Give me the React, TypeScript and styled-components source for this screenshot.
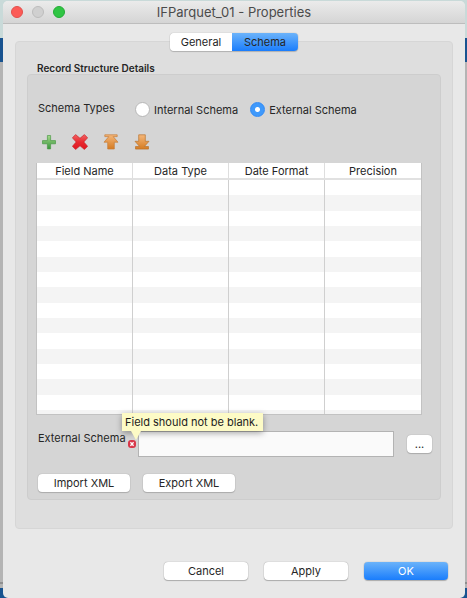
import React, { useState } from "react";
import styled, { createGlobalStyle, css } from "styled-components";

const GlobalStyle = createGlobalStyle`
  * { box-sizing: border-box; }
  body {
    margin: 0;
    font-family: Inter, "Liberation Sans", sans-serif;
    font-size: 11px;
    line-height: 14px;
    color: #262626;
  }
  button, input { font: inherit; color: inherit; }
`;

const Desktop = styled.div`
  display: flex;
  min-height: 100vh;
  padding: 1px 2px 0 3px;
  background: linear-gradient(
    #c9dad9 0, #c9dad9 38px,
    #185390 38px, #185390 62px,
    #b4b4b4 62px, #b4b4b4 calc(100% - 16px),
    #8f8f8f calc(100% - 16px), #8f8f8f calc(100% - 14px),
    #b4b4b4 calc(100% - 14px), #b4b4b4 calc(100% - 10px),
    #185390 calc(100% - 10px)
  );
`;

const Dialog = styled.main`
  flex: 1;
  display: flex;
  flex-direction: column;
  border-radius: 5px;
  background: #e8e8e8;
  overflow: hidden;
`;

const TitleBar = styled.header`
  display: grid;
  grid-template-columns: 1fr auto 1fr;
  align-items: center;
  height: 23px;
  padding: 0 8px;
  border-bottom: 1px solid #bdbdbd;
  background: linear-gradient(#ebebeb, #d5d5d5);
`;

const WindowControls = styled.div`
  display: flex;
  gap: 9px;
`;

const WindowControl = styled.button<{ $fill: string; $edge: string }>`
  width: 12px;
  height: 12px;
  padding: 0;
  border: 1px solid ${(p) => p.$edge};
  border-radius: 50%;
  background: ${(p) => p.$fill};
`;

const Title = styled.h1`
  margin: 0;
  font-size: 13px;
  line-height: 16px;
  font-weight: 400;
  color: #4b4b4b;
`;

const Content = styled.div`
  display: flex;
  flex-direction: column;
  padding: 9px 12px 18px;
`;

const TabList = styled.div`
  z-index: 1;
  align-self: center;
  display: flex;
  margin-bottom: -10px;
  border-radius: 4px;
  box-shadow: 0 0 1px #8a8a8a, 0 1px 1px #b5b5b5;
`;

const blue = css`
  background: linear-gradient(#6bb3fa, #1a7dfc);
`;

const Tab = styled.button<{ $active: boolean }>`
  height: 18px;
  width: 62px;
  padding: 0;
  border: 0;
  border-radius: 4px 0 0 4px;
  background: #fff;
  &:last-child { width: 66px; border-radius: 0 4px 4px 0; }
  ${(p) => p.$active && blue}
`;

const TabPanel = styled.section`
  padding: 20px 11px 28px;
  border: 1px solid #d6d6d6;
  border-radius: 4px;
  background: #dedede;
`;

const GroupTitle = styled.h2`
  margin: 0 10px;
  font-size: 10px;
  line-height: 12px;
  font-weight: 600;
`;

const Group = styled.div`
  display: flex;
  flex-direction: column;
  padding: 26px 18px 7px 8px;
  border: 1px solid #cdcdcd;
  border-radius: 4px;
  background: #d5d5d5;
`;

const TypeRow = styled.div`
  display: flex;
  padding-left: 2px;
`;

const TypeLabel = styled.span`
  width: 97px;
`;

const RadioLabel = styled.label`
  display: flex;
  align-items: center;
  gap: 4px;
  margin-right: 12px;
  padding-top: 1px;
`;

const Radio = styled.input`
  appearance: none;
  width: 15px;
  height: 15px;
  margin: 0;
  border: 1px solid #b7b7b7;
  border-radius: 50%;
  background: #fff;
  &:checked {
    border-color: #3089f5;
    background: radial-gradient(circle, #fff 0 2px, #3f99fb 3px);
  }
`;

const Toolbar = styled.div`
  display: flex;
  gap: 15px;
  margin: 17px 5px 13px;
`;

const ToolButton = styled.button`
  display: block;
  width: 16px;
  height: 16px;
  padding: 0;
  border: 0;
  background: none;
  svg { display: block; }
`;

const FieldTable = styled.table`
  width: 100%;
  height: 252px;
  table-layout: fixed;
  border-collapse: separate;
  border-spacing: 0;
  border: 1px solid #c2c2c2;
  border-top: 0;
  background: #fff;
`;

const HeadCell = styled.th`
  height: 17px;
  padding: 0;
  border-bottom: 2px solid #e1e1e1;
  border-right: 1px solid #dedede;
  font-weight: 400;
  &:last-child { border-right: 0; }
`;

const Row = styled.tr`
  &:nth-child(even) { background: #f4f4f4; }
  &:last-child td { height: 4px; }
`;

const Cell = styled.td`
  padding: 0;
  border-right: 1px solid #cfcfcf;
  &:last-child { border-right: 0; }
`;

const FieldRow = styled.div`
  display: flex;
  align-items: center;
  margin-top: 16px;
  margin-right: -10px;
`;

const FieldLabel = styled.label`
  align-self: flex-start;
  width: 92px;
  padding-left: 2px;
  white-space: nowrap;
`;

const ErrorMark = styled.span`
  position: relative;
  width: 8px;
  height: 8px;
  margin: 0 2px 0 0;
  svg { display: block; }
`;

const Tooltip = styled.span`
  position: absolute;
  left: -6px;
  bottom: 17px;
  height: 18px;
  padding: 1px 5px 1px 3px;
  line-height: 16px;
  white-space: nowrap;
  color: #1c1c1c;
  background: #fdfbc6;
  box-shadow: 0 2px 6px rgba(0, 0, 0, 0.35);
  &::after {
    content: "";
    position: absolute;
    left: 9px;
    top: 100%;
    border: 5px solid transparent;
    border-top: 9px solid #fdfbc6;
    border-bottom: 0;
  }
`;

const TextInput = styled.input`
  flex: 1;
  min-width: 0;
  height: 26px;
  padding: 0 4px;
  border: 1px solid #b3b3b3;
  background: #fafafa;
  outline: 0;
`;

const PushButton = styled.button<{ $width: number; $primary?: boolean }>`
  width: ${(p) => p.$width}px;
  height: 18px;
  padding: 0;
  border: 0;
  border-radius: 4px;
  line-height: 18px;
  background: #fff;
  box-shadow: 0 0 1px #858585, 0 1px 1px #b0b0b0;
  ${(p) => p.$primary && blue}
  ${(p) => p.$primary && "color: #fff;"}
`;

const BrowseButton = styled(PushButton)`
  margin-left: 13px;
`;

const ButtonRow = styled.div`
  display: flex;
  gap: 13px;
  margin: 17px 2px 0;
`;

const DialogButtons = styled.footer`
  display: flex;
  justify-content: flex-end;
  gap: 16px;
  margin: 33px 5px 0 0;
`;

const Gradients = () => (
  <defs>
    <linearGradient id="green" x2="0" y2="1">
      <stop offset="0" stopColor="#a5d88b" />
      <stop offset="1" stopColor="#37953b" />
    </linearGradient>
    <linearGradient id="red" x2="0" y2="1">
      <stop offset="0" stopColor="#f46464" />
      <stop offset="0.5" stopColor="#e82a30" />
      <stop offset="1" stopColor="#df1620" />
    </linearGradient>
    <linearGradient id="orange" x2="0" y2="1">
      <stop offset="0" stopColor="#f5b77a" />
      <stop offset="1" stopColor="#d57b21" />
    </linearGradient>
  </defs>
);

const tools = [
  { name: "Add field", fill: "green", edge: "#4c9b48", d: "M6.4 1.5h3.2v5.1h4.9v3.2H9.6v5.1H6.4V9.8H1.5V6.6h4.9z" },
  { name: "Delete field", fill: "red", edge: "#c9262b", d: "M3.6.6 8 4.3 12.4.6 15.6 3.8 11.8 8 15.6 12.3 12.4 15.5 8 11.7 3.6 15.5.4 12.3 4.2 8 .4 3.8z" },
  { name: "Move to top", fill: "orange", edge: "#c67c38", d: "M1.8.8h12.4v1.8H10.2l4.8 5.6H11.3V15H4.7V8.2H1l4.8-5.6h-4z" },
  { name: "Move to bottom", fill: "orange", edge: "#b8732f", d: "M4.7.8h6.6v6.5H15l-4.6 5.2h4.1v2.6h-13v-2.6h4.1L1 7.3h3.7z" },
];

const columns = ["Field Name", "Data Type", "Date Format", "Precision"];
const schemaTypes = ["Internal Schema", "External Schema"];

export default function App() {
  const [tab, setTab] = useState("Schema");
  const [schemaType, setSchemaType] = useState("External Schema");

  return (
    <>
      <GlobalStyle />
      <Desktop>
        <Dialog>
          <TitleBar>
            <WindowControls>
              <WindowControl aria-label="Close" $fill="#fc5b57" $edge="#e2504c" />
              <WindowControl aria-label="Minimize" $fill="#d0d0d0" $edge="#bcbcbc" />
              <WindowControl aria-label="Zoom" $fill="#30c544" $edge="#24ac37" />
            </WindowControls>
            <Title>IFParquet_01 - Properties</Title>
          </TitleBar>
          <Content>
            <TabList role="tablist">
              {["General", "Schema"].map((name) => (
                <Tab key={name} role="tab" aria-selected={tab === name} $active={tab === name} onClick={() => setTab(name)}>
                  {name}
                </Tab>
              ))}
            </TabList>
            <TabPanel role="tabpanel">
              <GroupTitle>Record Structure Details</GroupTitle>
              <Group>
                <TypeRow role="radiogroup" aria-labelledby="schema-types">
                  <TypeLabel id="schema-types">Schema Types</TypeLabel>
                  {schemaTypes.map((type) => (
                    <RadioLabel key={type}>
                      <Radio type="radio" name="schema" checked={schemaType === type} onChange={() => setSchemaType(type)} />
                      {type}
                    </RadioLabel>
                  ))}
                </TypeRow>
                <Toolbar>
                  {tools.map((tool) => (
                    <ToolButton key={tool.name} aria-label={tool.name}>
                      <svg width="16" height="16" viewBox="0 0 16 16">
                        <Gradients />
                        <path d={tool.d} fill={`url(#${tool.fill})`} stroke={tool.edge} strokeWidth="0.7" strokeLinejoin="round" />
                      </svg>
                    </ToolButton>
                  ))}
                </Toolbar>
                <FieldTable>
                  <thead>
                    <tr>
                      {columns.map((column) => (
                        <HeadCell key={column} scope="col">{column}</HeadCell>
                      ))}
                    </tr>
                  </thead>
                  <tbody>
                    {Array.from({ length: 16 }, (_, row) => (
                      <Row key={row}>
                        {columns.map((column) => <Cell key={column} />)}
                      </Row>
                    ))}
                  </tbody>
                </FieldTable>
                <FieldRow>
                  <FieldLabel htmlFor="external-schema">External Schema</FieldLabel>
                  <ErrorMark>
                    <svg width="8" height="8" viewBox="0 0 8 8">
                      <rect width="8" height="8" rx="3" fill="#d8374a" />
                      <path d="M2.4 2.2 5.6 5.8M5.6 2.2 2.4 5.8" stroke="#fff" strokeWidth="1.3" />
                    </svg>
                    <Tooltip role="tooltip" id="schema-error">Field should not be blank.</Tooltip>
                  </ErrorMark>
                  <TextInput id="external-schema" aria-invalid="true" aria-describedby="schema-error" />
                  <BrowseButton $width={25}>...</BrowseButton>
                </FieldRow>
                <ButtonRow>
                  <PushButton $width={92}>Import XML</PushButton>
                  <PushButton $width={92}>Export XML</PushButton>
                </ButtonRow>
              </Group>
            </TabPanel>
            <DialogButtons>
              <PushButton $width={84}>Cancel</PushButton>
              <PushButton $width={84}>Apply</PushButton>
              <PushButton $width={84} $primary>OK</PushButton>
            </DialogButtons>
          </Content>
        </Dialog>
      </Desktop>
    </>
  );
}
